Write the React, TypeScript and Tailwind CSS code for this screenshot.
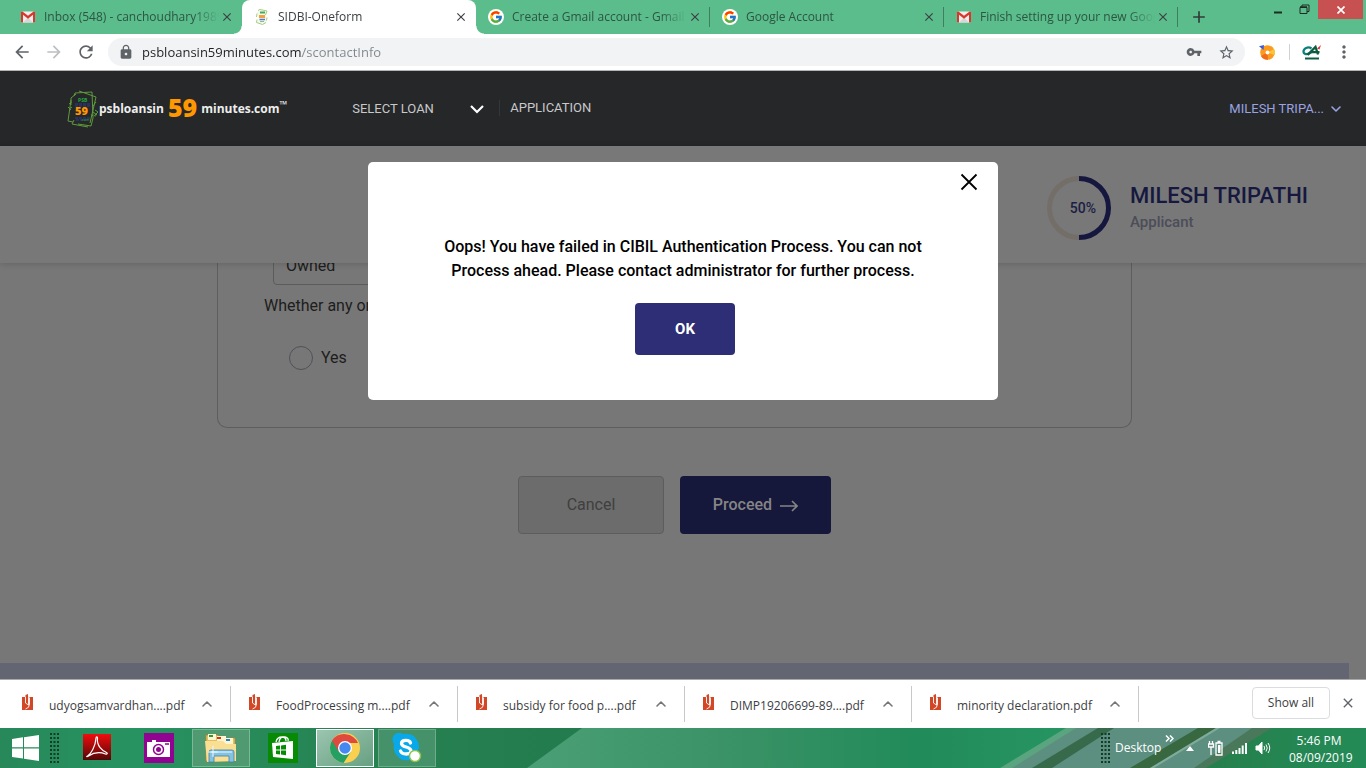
import type { ReactNode } from "react";
import { FcGoogle } from "react-icons/fc";
import {
  MdArrowBack,
  MdArrowForward,
  MdRefresh,
  MdLock,
  MdVpnKey,
  MdStarBorder,
  MdMoreVert,
  MdClose,
  MdAdd,
} from "react-icons/md";
import { ChevronDown, ChevronUp } from "lucide-react";

const uiFont = "font-['Open_Sans','Noto_Sans',sans-serif]";

function GmailIcon() {
  return (
    <svg viewBox="0 0 16 16" className="size-4" aria-hidden="true">
      <rect x="1" y="2.5" width="14" height="11" rx="1" fill="#f1efee" />
      <path d="M3 13.500 8 8.500l5 5z" fill="#d9d6d4" />
      <path d="M1 3.500v9.200c0 .5.400.8.800.8H3V5.800l5 3.900 5-3.900v7.700h1.200c.5 0 .8-.3.800-.8V3.500c0-.9-1-1.300-1.800-.8L8 6.800 2.800 2.700C2 2.200 1 2.600 1 3.500z" fill="#d8382b" />
    </svg>
  );
}

function GoogleIcon() {
  return (
    <span className="flex size-4 items-center justify-center rounded-full bg-white">
      <FcGoogle className="size-3.5" />
    </span>
  );
}

function NoteIcon() {
  return (
    <svg viewBox="0 0 16 16" className="h-4 w-4" fill="none" aria-hidden="true">
      <path d="M3 3.500 5 1l8 1.500-1 4 1 6-3 3-7-2 1.500-4z" fill="#f6f8ef" />
      <path d="M4 1.500 6 .5l7 1.500-1.500 4M3 4.500 2.500 8M3 10.500l-.5 3 6 2 3.500-2M13 8.500l-.5 3" stroke="#a5cd7c" />
      <path d="M6 3.500h5" stroke="#3fae5a" strokeWidth="2" />
      <path d="M5 7.500h6" stroke="#f2a23a" strokeWidth="3" />
      <path d="M5.500 10.500H11" stroke="#5878c8" strokeWidth="1.500" />
      <path d="M6 12.500h4" stroke="#86b9a0" />
    </svg>
  );
}

type Tab = { title: string; icon: ReactNode; active?: boolean; divider?: boolean };

const tabs: Tab[] = [
  { title: "Inbox (548) - canchoudhary1989", icon: <GmailIcon /> },
  { title: "SIDBI-Oneform", icon: <NoteIcon />, active: true },
  { title: "Create a Gmail account - Gmail", icon: <GoogleIcon />, divider: true },
  { title: "Google Account", icon: <GoogleIcon />, divider: true },
  { title: "Finish setting up your new Goog", icon: <GmailIcon />, divider: true },
];

function TabStrip() {
  return (
    <header className="flex h-[34px] shrink-0 bg-[#5bbd8c] pl-2">
      <div role="tablist" className="flex min-w-0 text-[#2c5542]">
        {tabs.map((t) => (
          <div
            key={t.title}
            role="tab"
            aria-selected={!!t.active}
            className={`relative flex w-[234px] min-w-0 items-center pl-3 pr-[7px] ${
              t.active ? "rounded-t-lg bg-white text-[#3c4043]" : ""
            }`}
          >
            {t.active && (
              <>
                <span className="absolute bottom-0 -left-2 size-2 bg-[radial-gradient(circle_at_0_0,#5bbd8c_7px,white_8px)]" />
                <span className="absolute -right-2 bottom-0 size-2 bg-[radial-gradient(circle_at_100%_0,#5bbd8c_7px,white_8px)]" />
              </>
            )}
            <span className="shrink-0">{t.icon}</span>
            <span className="ml-2 min-w-0 flex-1 overflow-hidden text-[12px] leading-5 whitespace-nowrap [mask-image:linear-gradient(to_right,black_85%,transparent)]">
              {t.title}
            </span>
            <button aria-label={`Close ${t.title}`} className="flex size-4 items-center justify-center">
              <MdClose className="size-3.5 text-[#3c4043]" />
            </button>
            {t.divider && <span className="absolute top-[7px] right-0 h-5 w-px bg-[#3f7f60]" />}
          </div>
        ))}
      </div>
      <button aria-label="New tab" className="ml-3 flex size-[17px] shrink-0 items-center justify-center self-center text-[#2f3d37]">
        <MdAdd className="size-5 shrink-0" />
      </button>
      <div className="ml-auto flex items-start pr-[3px]">
        <button aria-label="Minimize" className="flex h-[19px] w-[26px] items-center justify-center">
          <svg viewBox="0 0 10 10" className="size-2.5"><path d="M1 6.500h8v2H1z" fill="#1f2a25" /></svg>
        </button>
        <button aria-label="Restore" className="flex h-[19px] w-[27px] items-center justify-center">
          <svg viewBox="0 0 11 11" className="size-[11px]" fill="none" stroke="#1f2a25">
            <path d="M1 3.500h7v6H1zM3 3V1h7v6.500H8" />
            <path d="M1 3h7" strokeWidth="1.500" />
          </svg>
        </button>
        <button aria-label="Close window" className="flex h-[19px] w-[45px] items-center justify-center bg-[#c75050] text-white">
          <svg viewBox="0 0 8 8" className="size-2" stroke="currentColor" strokeWidth="1.700"><path d="m.5.5 7 7M7.500.5l-7 7" /></svg>
        </button>
      </div>
    </header>
  );
}

function Toolbar() {
  return (
    <div className="flex h-9 shrink-0 items-center bg-white text-[#5f6368]">
      <div className="flex w-[108px] shrink-0 items-center gap-3 pl-3">
        <button aria-label="Back"><MdArrowBack className="size-5" /></button>
        <button aria-label="Forward" className="text-[#bdbfc1]"><MdArrowForward className="size-5" /></button>
        <button aria-label="Reload"><MdRefresh className="size-5" /></button>
      </div>
      <div className="flex h-7 min-w-0 flex-1 items-center rounded-full bg-[#f1f3f4] pr-2.5 pl-2.5">
        <MdLock className="size-4 shrink-0" />
        <input
          aria-label="Address"
          defaultValue="psbloansin59minutes.com/scontactInfo"
          className="ml-2 min-w-0 flex-1 bg-[linear-gradient(to_right,#202124_160px,#80868b_160px)] bg-clip-text text-[13px] leading-5 text-transparent outline-none"
        />
        <button aria-label="Saved passwords"><MdVpnKey className="size-4" /></button>
        <button aria-label="Bookmark" className="ml-4"><MdStarBorder className="size-[17px]" /></button>
      </div>
      <button aria-label="Download extension" className="ml-3.5 shrink-0">
        <svg viewBox="0 0 16 16" className="size-4">
          <circle cx="8.500" cy="8.500" r="7.300" fill="#fb9a1c" />
          <path d="M8.500 8.500 15 5a7.300 7.300 0 0 1 .5 6z" fill="#fdc43a" />
          <path d="M8.500 8.500 2 12a7.300 7.300 0 0 0 7 3.800z" fill="#f26a1b" />
          <circle cx="8.500" cy="8.500" r="2" fill="#fff" />
          <path d="M0 2.200 5 1 4.500 6z" fill="#3c5bdc" />
        </svg>
      </button>
      <span className="ml-3.5 h-4 w-px bg-[#cfd1d3]" />
      <button aria-label="Crédit Agricole" className="ml-3 shrink-0">
        <svg viewBox="0 0 20 16" className="h-4 w-5" fill="none">
          <path d="M9.500 4.500C6 2 1.500 4.500 1.500 7.500s4 3.500 7.500 1" stroke="#087f7c" strokeWidth="2.200" />
          <path d="M5.500 11 13.500 3l2.500 7.500M8 8.200h9.500" stroke="#0b5c40" strokeWidth="2.300" />
          <path d="m15 4.500 4-3.500-1.500 4.500z" fill="#e5322d" />
          <path d="M3 14.500h14" stroke="#0b5c40" strokeWidth="2" />
        </svg>
      </button>
      <button aria-label="Menu" className="mr-3 ml-3 shrink-0"><MdMoreVert className="size-5" /></button>
    </div>
  );
}

function LoanLogo() {
  return (
    <svg viewBox="0 0 32 38" className="h-[38px] w-8 shrink-0" fill="none" aria-hidden="true">
      <g stroke="#5f9a3c">
        <path d="m7 6 1-3 17-1 1 26-2 8-13-2M12 1l17 6-6 26M9 4 4 8v7M4 10 2 24 1 31l5 1M5 17l-3 2M28 20l3 2-3 3M26 22l4 3M7 30l-2 4 16 3" />
        <path d="M2 14l3-2M1 17l3 3M29 12l-3 4M24 25l5 1" strokeDasharray="2 1" />
      </g>
      <path d="M8 14h16M8 16h15" stroke="#2d3e9b" strokeDasharray="3 1" />
      <path d="M8 28h15M9 30h10" stroke="#2d3e9b" strokeDasharray="3 1" />
      <text x="11" y="12" fill="#24a943" fontSize="5" fontWeight="700" fontFamily="Open Sans">PSB</text>
      <text x="8" y="25" fill="#ff9800" fontSize="11" fontWeight="800" fontFamily="Open Sans">59</text>
      <text x="14" y="31" fill="#24833a" fontSize="3.500" fontFamily="Open Sans">.com</text>
    </svg>
  );
}

function SiteNav() {
  return (
    <nav className="flex h-[76px] shrink-0 items-center border-t border-[#b5b5b5] bg-[#252729] pr-[22px] pl-[67px] text-[13px] text-[#c9c9c9]">
      <a href="#home" className={`flex shrink-0 items-center text-[12px] font-bold text-[#eeeeee] ${uiFont}`}>
        <LoanLogo />
        <span>psbloansin</span>
        <span className="mx-1 pb-1 text-[25px] leading-8 font-extrabold text-[#ff9800]">59</span>
        <span>minutes.com</span>
        <span className="self-start pt-1.5 text-[10px] leading-4">™</span>
      </a>
      <button className="ml-[65px] flex w-[133px] shrink-0 items-center justify-between">
        SELECT LOAN
        <svg viewBox="0 0 16 10" className="h-2.5 w-4 text-white" fill="none" stroke="currentColor" strokeWidth="2.200"><path d="m2 2 6 6 6-6" /></svg>
      </button>
      <a href="#application" className="mb-0.5 ml-3.5 border-l border-[#34363a] pl-2.5 leading-4">APPLICATION</a>
      <button className="ml-auto flex items-center gap-1 text-[#9aa3e0]">
        MILESH TRIPA...
        <ChevronDown className="size-4" strokeWidth={2.400} />
      </button>
    </nav>
  );
}

function Applicant() {
  return (
    <section className="relative flex h-[117px] shrink-0 items-center justify-end bg-[#787878] pr-[58px] shadow-[0_1px_6px_rgba(0,0,0,0.16)]">
      <div className="relative mt-1.5 size-16">
        <svg viewBox="0 0 64 64" className="size-16" fill="none" strokeWidth="5">
          <path d="M32 2.500a29.500 29.500 0 0 0 0 59" stroke="#746e69" />
          <path d="M32 2.500a29.500 29.500 0 0 1 0 59" stroke="#15173f" />
        </svg>
        <span className="absolute inset-0 flex items-center justify-center pt-0.5 pl-2 text-[14px] font-medium text-[#1c1e45]">50%</span>
      </div>
      <div className="mt-1.5 ml-[19px]">
        <h1 className="text-[22px] leading-7 font-medium text-[#16183f]">MILESH TRIPATHI</h1>
        <p className="text-[15px] leading-6 font-medium text-[#4c4d58]">Applicant</p>
      </div>
    </section>
  );
}

function LoanForm() {
  return (
    <form className="flex flex-1 flex-col overflow-hidden pr-[17px] text-[#1d1d1d]">
      <div className="mx-auto h-[165px] w-[915px] max-w-full shrink-0 rounded-b-[10px] border border-t-0 border-[#5e5e60] pl-[46px]">
        <select
          aria-label="Residence type"
          defaultValue="Owned"
          className="-mt-[18px] ml-[9px] block h-10 w-[280px] appearance-none rounded-[4px] border border-[#5c5c5e] px-3 pt-0.5 text-[16px]"
        >
          <option>Owned</option>
          <option>Rented</option>
        </select>
        <fieldset>
          <legend className="pt-[9px] text-[16px] leading-6">Whether any one</legend>
          <label className="mt-7 ml-[25px] flex w-fit items-center gap-2 text-[16px] leading-6">
            <input type="radio" name="any" className="size-6 appearance-none rounded-full border border-[#505058]" />
            Yes
          </label>
        </fieldset>
      </div>
      <div className="mt-12 flex justify-center gap-4 text-[16px]">
        <button type="button" className="h-[58px] w-[146px] rounded-[4px] border border-[#5d5d5d] bg-[#6c6c6c] text-[#3f3f3f]">Cancel</button>
        <button type="button" className="flex h-[58px] w-[151px] items-center justify-center gap-2 rounded-[4px] bg-[#15173b] font-medium text-[#858585]">
          Proceed
          <svg viewBox="0 0 18 12" className="mt-0.5 h-3 w-[18px]" fill="none" stroke="currentColor" strokeWidth="1.600">
            <path d="M0 6h17M12 1l5 5-5 5" />
          </svg>
        </button>
      </div>
    </form>
  );
}

function FailureDialog() {
  return (
    <div className="absolute inset-x-0 top-[92px] flex justify-center">
      <div role="alertdialog" aria-labelledby="failure-message" className="relative flex h-[238px] w-[630px] max-w-full flex-col items-center rounded-[5px] bg-white pt-[73px] text-[16px] text-black">
        <button aria-label="Close dialog" className="absolute top-2.5 right-[19px] flex size-5 items-center justify-center">
          <svg viewBox="0 0 20 20" className="size-5" stroke="#000" strokeWidth="1.800"><path d="m2.500 2.500 15 15M17.500 2.500l-15 15" /></svg>
        </button>
        <p id="failure-message" className="w-[490px] text-center leading-6 font-medium">
          Oops! You have failed in CIBIL Authentication Process. You can not Process ahead. Please contact administrator for further process.
        </p>
        <button className="mt-5 ml-1 h-[52px] w-[100px] rounded-[4px] bg-[#2d2e75] text-[15px] font-bold text-white">OK</button>
      </div>
    </div>
  );
}

const downloads = [
  "udyogsamvardhan....pdf",
  "FoodProcessing m....pdf",
  "subsidy for food p....pdf",
  "DIMP19206699-89....pdf",
  "minority declaration.pdf",
];

function DownloadShelf() {
  return (
    <section aria-label="Downloads" className="flex h-[49px] shrink-0 items-center border-t border-[#aaa9aa] bg-white pl-1 text-[#3c4043]">
      {downloads.map((name) => (
        <div key={name} className="flex h-9 w-[227px] min-w-0 items-center border-r border-[#c8c8c8] pl-[17px]">
          <svg viewBox="0 0 13 17" className="mb-1 h-[17px] w-[13px] shrink-0" aria-hidden="true">
            <path d="M1 3h3.500V1L7 0v2h1v2l1-1h3v13H1z" fill="#d24726" />
            <path d="M4.500 3v6l3 2V2M8.500 4v6q0 4-4 5" fill="none" stroke="#fff" strokeWidth=".9" />
          </svg>
          <button className="ml-[15px] w-[142px] pt-1 text-left text-[12px] leading-5 whitespace-nowrap">{name}</button>
          <button aria-label={`Options for ${name}`} className="ml-2"><ChevronUp className="size-4 text-[#737679]" strokeWidth={2.400} /></button>
        </div>
      ))}
      <button className="mr-2.5 mb-0.5 ml-auto h-8 w-[78px] shrink-0 rounded-[4px] border border-[#dadce0] text-[12px] font-medium">Show all</button>
      <button aria-label="Close downloads" className="mr-2.5 mb-0.5 shrink-0"><MdClose className="size-4 text-[#5f6368]" /></button>
    </section>
  );
}

function TaskbarBackdrop() {
  return (
    <svg viewBox="0 0 1366 40" preserveAspectRatio="none" className="absolute inset-0 size-full" aria-hidden="true">
      <defs>
        <linearGradient id="base"><stop offset="0" stopColor="#27885a" /><stop offset=".1" stopColor="#279360" /><stop offset=".25" stopColor="#278353" /><stop offset=".4" stopColor="#237c4d" /></linearGradient>
        <linearGradient id="light"><stop offset="0" stopColor="#4b9f76" /><stop offset=".4" stopColor="#389164" /><stop offset=".7" stopColor="#218b59" /><stop offset="1" stopColor="#279662" /></linearGradient>
        <linearGradient id="right"><stop offset="0" stopColor="#267f4c" /><stop offset="1" stopColor="#238b57" /></linearGradient>
      </defs>
      <path d="M0 0h1366v40H0z" fill="url(#base)" />
      <path d="M582 0h500l-80 40H527z" fill="url(#light)" />
      <path d="M1066 0h216l-80 40h-200z" fill="#5d8f80" />
      <path d="M1066 0h10l-64 40h-12z" fill="#5aa480" />
      <path d="M1098 0h16l-62 40h-20z" fill="#376a4a" />
      <path d="M1198 0h18l-66 40h-20z" fill="#37683f" />
      <path d="M1216 0h4l-66 40h-4z" fill="#81ab9a" />
      <path d="M1252 0h28l-64 40h-22z" fill="#49785a" />
      <path d="M1272 0h94v40h-160z" fill="url(#right)" />
    </svg>
  );
}

function Grip() {
  return (
    <svg viewBox="0 0 9 31" className="h-[31px] w-[9px] shrink-0" aria-hidden="true">
      <path d="M1 0v31M4.500 0v31M8 0v31" stroke="#123c28" strokeWidth="2" strokeDasharray="2 2" />
    </svg>
  );
}

const apps: { name: string; frame?: string; icon: ReactNode }[] = [
  {
    name: "Adobe Reader",
    icon: (
      <svg viewBox="0 0 28 28" className="size-7">
        <defs><linearGradient id="pdf" x2="0" y2="1"><stop stopColor="#f20c0c" /><stop offset="1" stopColor="#520707" /></linearGradient></defs>
        <path d="M0 0h28v26H0z" fill="url(#pdf)" />
        <path d="M4.500 22c3-1.500 8-9 8.500-18 .1-1.500 1.500-1.500 1.500 0-1 8 5 13 9 14.500 1.500.8.500 2-1 1.500-5-2-11-2-17 2-1.500 1-2.500.5-1-0z" fill="none" stroke="#fff" strokeWidth="1.200" />
      </svg>
    ),
  },
  {
    name: "Camera",
    icon: (
      <svg viewBox="0 0 30 30" className="size-[30px]">
        <path d="M0 0h30v30H0z" fill="#910491" />
        <path d="M3 9h5V7h4v2h14v15H3z" fill="#fff" />
        <circle cx="14.500" cy="16.500" r="5" fill="none" stroke="#910491" strokeWidth="1.500" />
        <circle cx="14.500" cy="16.500" r="2.500" fill="#910491" />
        <path d="M21 11h4" stroke="#910491" strokeWidth="1.500" />
      </svg>
    ),
  },
  {
    name: "File Explorer",
    frame: "border border-[#7fb698] bg-[#509a72]",
    icon: (
      <svg viewBox="0 0 34 32" className="h-8 w-[34px]">
        <path d="M2 3h12v3h17v23H2z" fill="#e5bd5c" stroke="#aa873a" strokeWidth=".7" />
        <path d="M4 2h8v6H4z" fill="#fff6cf" /><path d="M5 3h4v2H5z" fill="#269c38" />
        <path d="M13 4h9v6h-9z" fill="#fff6cf" /><path d="M13 5h4v2h-4z" fill="#cb352a" />
        <path d="M20 6h9v6h-9z" fill="#fff6cf" /><path d="M22 7h4v2h-4z" fill="#2584c9" />
        <path d="M1 9h18l3 3h10v17l-29 1z" fill="#f9df94" />
        <path d="M5 30V20q0-2 2-2h21q2 0 2 2v10h-5v-6H10v6z" fill="#83c2e1" stroke="#3c80aa" strokeWidth=".8" />
        <path d="M7 20h21M9 14v11M4 20h10" stroke="#e9f8ff" />
      </svg>
    ),
  },
  {
    name: "Store",
    icon: (
      <svg viewBox="0 0 30 30" className="size-[30px]">
        <path d="M0 0h30v30H0z" fill="#078b05" />
        <path d="m4 10 21-2v18L5 24z" fill="#fff" />
        <path d="M8 9q1-5 6-5 4 0 4 4M11 9q1-6 6-5 4 1 3 4" fill="none" stroke="#fff" strokeWidth="1.300" />
        <path d="m8 13 4-.5v4H8zm5-.6 5-.6v4.700h-5zM8 17.500h4v4L8 21zm5 0h5v4.700l-5-.6z" fill="#078b05" />
      </svg>
    ),
  },
  {
    name: "Chrome",
    frame: "border border-white bg-linear-to-br from-[#9bc5af] to-[#67a082]",
    icon: (
      <svg viewBox="0 0 30 30" className="size-[30px]">
        <circle cx="15" cy="15" r="15" fill="#fcd04f" />
        <path d="M2 7.500A15 15 0 0 0 13.500 29.900L21 18.500l-6-3z" fill="#23a062" />
        <path d="M2 7.500 9 19l6-9h13a15 15 0 0 0-26-2.500z" fill="#df4a3f" />
        <circle cx="15" cy="15" r="7" fill="#fff" /><circle cx="15" cy="15" r="5.700" fill="#4688f1" />
      </svg>
    ),
  },
  {
    name: "Skype",
    frame: "border border-[#70aa8b] bg-[#459169]",
    icon: (
      <svg viewBox="0 0 30 30" className="size-[30px]">
        <path d="M2 2q4-4 9-1 11-2 15 8 2 5 0 9 3 5 0 8t-8 1Q8 29 3 20q-2-5-1-9-3-5 0-9z" fill="#08a8e9" />
        <path d="M18.500 10c-1-3.500-9-3.500-9 .5 0 4.500 9.500 2.500 9.500 7.500 0 4-9 4-10.500 0" fill="none" stroke="#fff" strokeWidth="3.300" strokeLinecap="round" />
        <circle cx="23" cy="23" r="5.500" fill="#fff" stroke="#8bc34a" strokeWidth="1.400" />
      </svg>
    ),
  },
];

function Taskbar() {
  return (
    <footer className="relative h-10 shrink-0 overflow-hidden text-[12px] text-white">
      <TaskbarBackdrop />
      <div className="relative flex h-full items-center">
        <button aria-label="Start" className="ml-3 shrink-0">
          <svg viewBox="0 0 27 26" className="h-[26px] w-[27px]" fill="#fff">
            <path d="M0 4 11 2.300v10H0zM12 2.200 27 0v12.300H12zM0 13.500h11v10L0 22zM12 13.500h15V26l-15-2.300z" />
          </svg>
        </button>
        <span className="ml-[11px]"><Grip /></span>
        <div className="ml-[9px] flex gap-1">
          {apps.map((a) => (
            <button key={a.name} aria-label={a.name} className={`flex h-[38px] w-[58px] items-center justify-center ${a.frame ?? ""}`}>
              {a.icon}
            </button>
          ))}
        </div>
        <div className="mr-[17px] ml-auto flex items-center">
          <Grip />
          <span className="ml-[5px] w-[46px]">Desktop</span>
          <svg viewBox="0 0 9 7" className="mb-5 ml-1 h-[7px] w-[9px]" fill="none" stroke="#fff" strokeWidth="1.500"><path d="m1 .5 3 3-3 3M5 .5l3 3-3 3" /></svg>
          <svg viewBox="0 0 8 5" className="ml-3 h-[5px] w-2" fill="#fff"><path d="m4 0 4 5H0z" /></svg>
          <svg viewBox="0 0 16 18" className="ml-3.5 h-[18px] w-4" fill="none" stroke="#fff" strokeWidth="1.300">
            <path d="M8 4h6v12H8zM9.500 2.500h3M.5 5h5v3h-5zM1.500 2v3M4.500 2v3M3 8v8" />
            <path d="M10 6h2.500v8H10z" fill="#fff" stroke="none" />
          </svg>
          <svg viewBox="0 0 15 12" className="ml-2 h-3 w-[15px]" stroke="#fff" strokeWidth="2"><path d="M1 12V9.500M4.300 12V8M7.500 12V6M10.700 12V3.500M14 12V1" /></svg>
          <svg viewBox="0 0 16 14" className="ml-2 h-3.5 w-4" fill="none" stroke="#fff">
            <path d="M1 5h2.500L7 1v12L3.500 9H1z" fill="#fff" /><path d="M9 5q1.500 2 0 4M11 3.500q2.500 3.500 0 7M13 2q3.500 5 0 10" />
          </svg>
          <time className="ml-[18px] w-[60px] pt-0.5 text-center leading-[17px]">5:46 PM<br />08/09/2019</time>
        </div>
      </div>
    </footer>
  );
}

export default function App() {
  return (
    <div className={`flex min-h-screen flex-col overflow-hidden bg-[#777777] ${uiFont}`}>
      <TabStrip />
      <Toolbar />
      <main className="relative flex flex-1 flex-col font-['Roboto',sans-serif]">
        <SiteNav />
        <Applicant />
        <LoanForm />
        <div className="mr-[17px] h-4 shrink-0 bg-[#646573]" />
        <FailureDialog />
      </main>
      <DownloadShelf />
      <Taskbar />
    </div>
  );
}
